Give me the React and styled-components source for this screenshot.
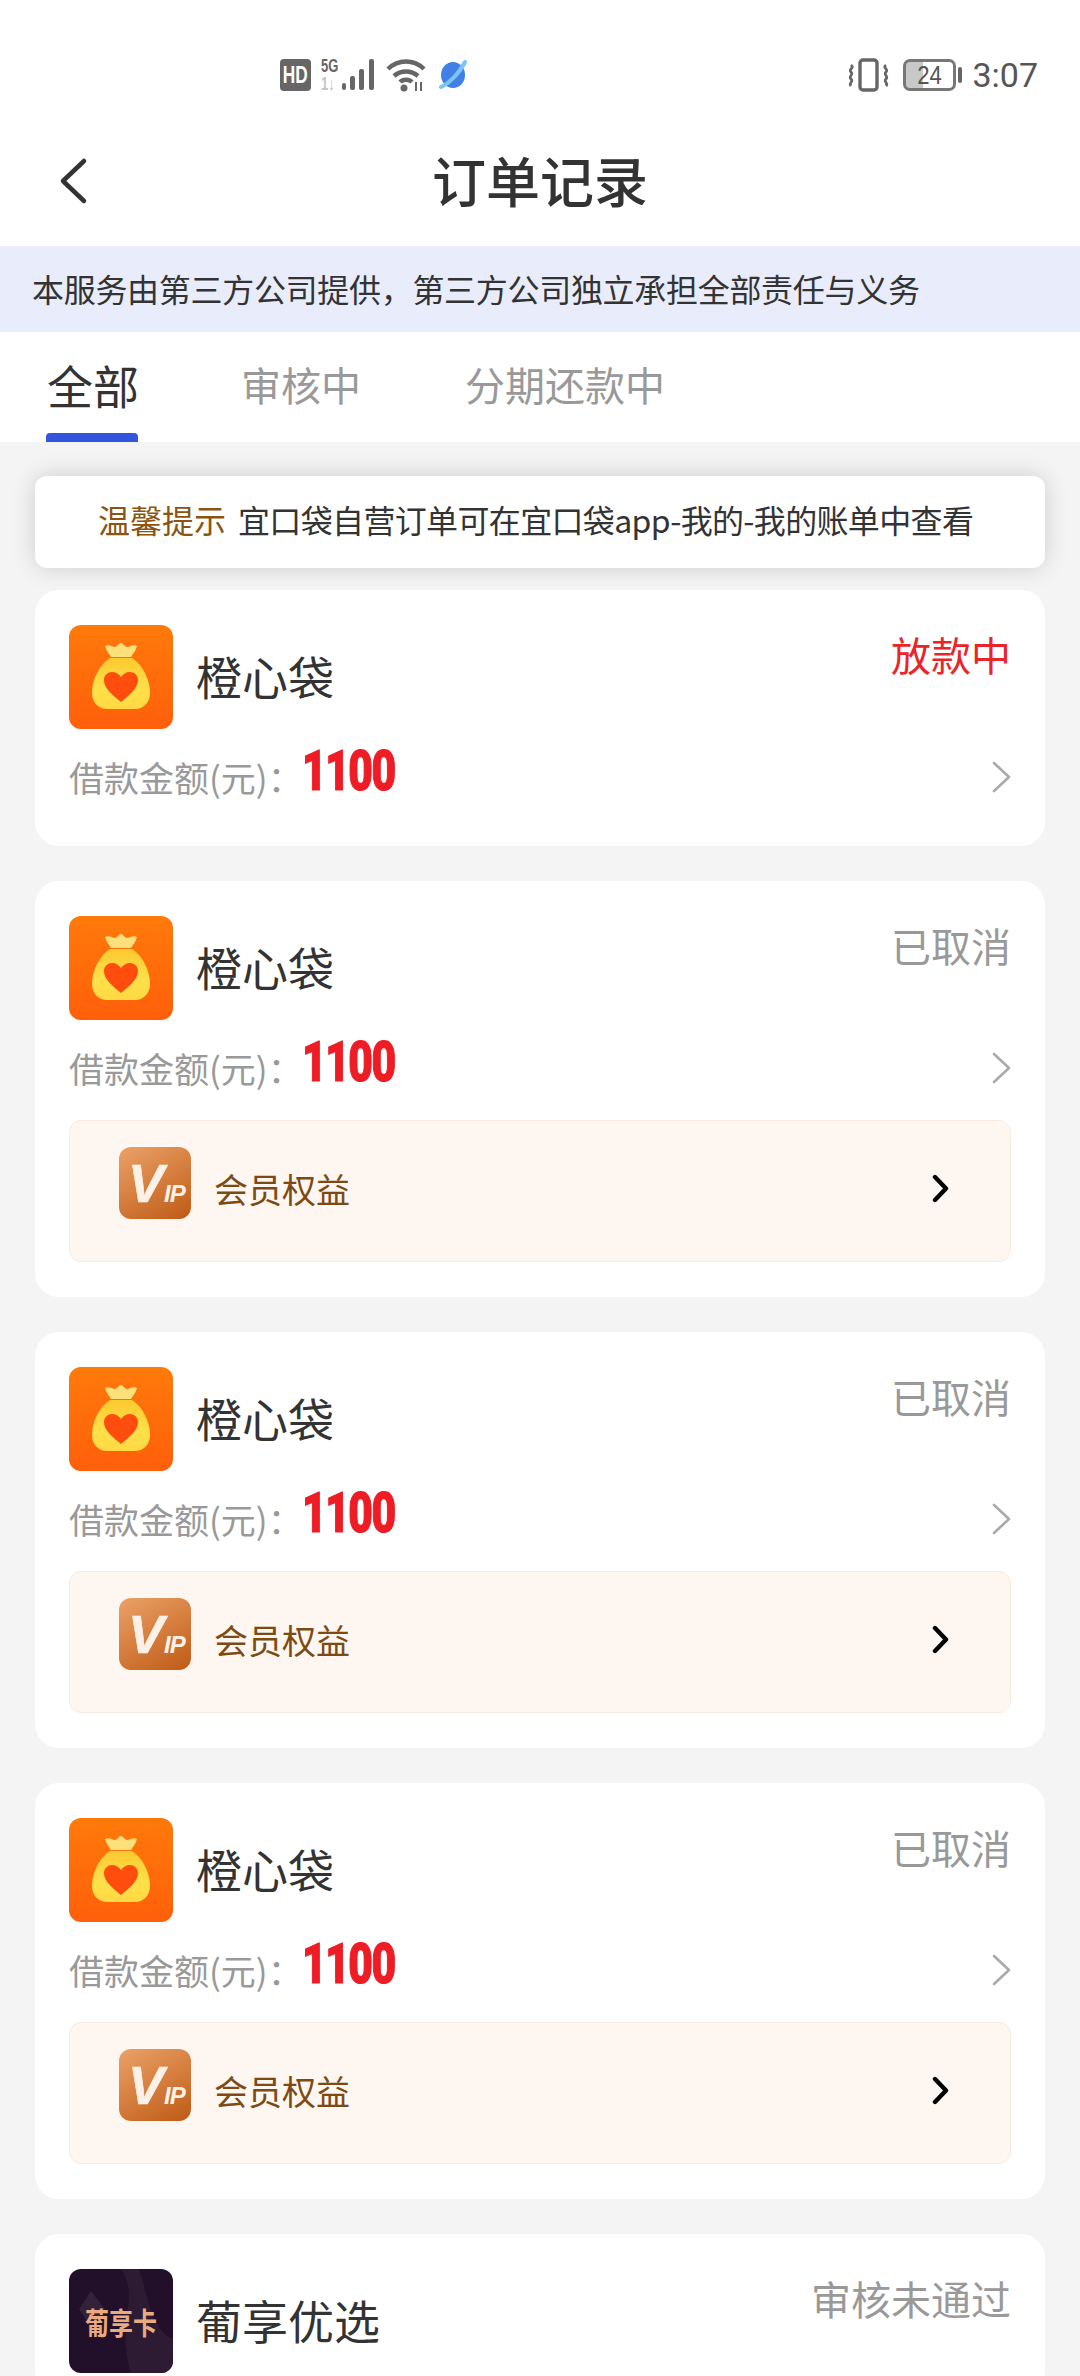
import React from 'react'
import styled, { createGlobalStyle } from 'styled-components'

const cjk = '"Noto Sans CJK SC", "Noto Sans", sans-serif'

const GlobalStyle = createGlobalStyle`
  html, body {
    margin: 0;
    padding: 0;
    background: #f4f4f4;
  }
  body {
    width: 1080px;
    height: 2376px;
    overflow: hidden;
    font-family: ${cjk};
  }
  * {
    box-sizing: border-box;
  }
`

const Page = styled.div`
  width: 1080px;
  height: 2376px;
  overflow: hidden;
  background: #f4f4f4;
`

const Top = styled.div`
  background: #fff;
`

const StatusBar = styled.div`
  height: 125px;
  padding: 59px 42px 0 280px;
  display: flex;
  align-items: flex-start;
`

const StatusLeft = styled.div`
  display: flex;
  align-items: center;
  gap: 10px;
  height: 32px;
`

const StatusRight = styled.div`
  margin-left: auto;
  display: flex;
  align-items: center;
  height: 32px;
`

const HdTile = styled.span`
  width: 31px;
  height: 32px;
  border-radius: 4px;
  background: #666;
  display: flex;
  align-items: center;
  justify-content: center;
  span {
    color: #fff;
    font: 700 24px/32px 'Liberation Sans', sans-serif;
    transform: scaleX(0.72);
  }
`

const NetStack = styled.span`
  width: 20px;
  display: flex;
  flex-direction: column;
  align-items: flex-start;
  font: 700 18px/15px 'Liberation Sans', sans-serif;
  color: #666;
  span {
    transform: scaleX(0.72);
    transform-origin: left center;
  }
  span + span {
    color: #c4c4c4;
    margin-top: 3px;
  }
`

const BatteryBox = styled.span`
  width: 53px;
  height: 32px;
  margin-left: 13px;
  border: 3px solid #777;
  border-radius: 7px;
  color: #555;
  font: 400 26px/26px 'Liberation Sans', sans-serif;
  text-align: center;
  background: linear-gradient(90deg, #c8c8c8 36%, transparent 36%);
  span {
    display: block;
    transform: scaleX(0.85);
  }
`

const BatteryNub = styled.span`
  width: 4px;
  height: 16px;
  margin-left: 2px;
  border-radius: 2px;
  background: #666;
`

const Clock = styled.span`
  margin-left: 10px;
  color: #555;
  font: 400 34px/32px Roboto, 'Liberation Sans', sans-serif;
`

const Header = styled.div`
  height: 121px;
  position: relative;
  display: flex;
  align-items: center;
  justify-content: center;
`

const BackIcon = styled.svg`
  position: absolute;
  left: 58px;
  top: 30px;
`

const Title = styled.h1`
  margin: -12px 0 0;
  font: 500 54px/72px ${cjk};
  color: #333;
`

const Banner = styled.div`
  height: 86px;
  padding-left: 32px;
  background: #e9edfb;
  color: #333;
  font: 400 32px/84px ${cjk};
  letter-spacing: -0.3px;
`

const Tabs = styled.div`
  height: 110px;
  padding: 22px 0 0 46px;
  display: flex;
`

const Tab = styled.div`
  width: ${p => p.$width}px;
  display: flex;
  flex-direction: column;
  align-items: flex-start;
  color: ${p => (p.$active ? '#333' : '#999')};
  font: 400 ${p => (p.$active ? 46 : 40)}px/60px ${cjk};
  padding-left: ${p => (p.$active ? 1 : 0)}px;
  &::after {
    content: '';
    width: 92px;
    height: 9px;
    margin-top: 19px;
    margin-left: -1px;
    border-radius: 4px 4px 0 0;
    background: ${p => (p.$active ? '#3355dd' : 'transparent')};
  }
`

const List = styled.div`
  padding: 34px 35px 0;
  display: flex;
  flex-direction: column;
`

const Notice = styled.div`
  height: 92px;
  margin-bottom: 22px;
  padding-left: 63px;
  border-radius: 12px;
  background: #fff;
  box-shadow: 0 0 24px rgba(0, 0, 0, 0.16);
  color: #333;
  font: 400 32px/87px ${cjk};
  white-space: nowrap;
  letter-spacing: -0.65px;
  span {
    color: #8a5412;
    margin-right: 12px;
    letter-spacing: 0;
  }
`

const Orders = styled.div`
  display: flex;
  flex-direction: column;
  gap: 35px;
`

const Card = styled.div`
  padding: 35px 34px 21px;
  border-radius: 24px;
  background: #fff;
`

const CardHead = styled.div`
  height: 104px;
  display: flex;
`

const AppIcon = styled.div`
  width: 104px;
  height: 104px;
  flex: none;
  border-radius: 12px;
  overflow: hidden;
  position: relative;
`

const AppName = styled.div`
  margin: 18px 0 0 23px;
  color: #333;
  font: 400 46px/64px ${cjk};
`

const Status = styled.div`
  margin-left: auto;
  color: ${p => (p.$red ? '#e8262a' : '#999')};
  font: 400 40px/62px ${cjk};
  margin-top: -2px;
`

const AmountRow = styled.div`
  height: 96px;
  display: flex;
  align-items: center;
`

const AmountLabel = styled.span`
  color: #999;
  font: 400 35px/50px ${cjk};
`

const Amount = styled.span`
  margin: -12px 0 0 -1px;
  color: #ee1c25;
  font: 900 56px/60px Roboto, 'Liberation Sans', sans-serif;
  letter-spacing: -2px;
  -webkit-text-stroke: 1.2px #ee1c25;
  transform: scaleX(0.76);
  transform-origin: left center;
`

const RowArrow = styled.svg`
  margin-left: auto;
`

const Perk = styled.div`
  height: 142px;
  margin: 4px 0 14px;
  padding: 0 61px 0 49px;
  border: 1px solid #f9ebdf;
  border-radius: 12px;
  background: #fdf6f1;
  display: flex;
  align-items: center;
`

const VipTile = styled.div`
  width: 72px;
  height: 72px;
  flex: none;
  margin-top: -16px;
  padding-left: 9px;
  border-radius: 12px;
  background: linear-gradient(150deg, #eba268, #bf5a15);
  color: #fcf1e6;
  display: flex;
  align-items: baseline;
  font-family: 'Liberation Sans', sans-serif;
  font-style: italic;
  font-weight: 700;
  line-height: 72px;
  overflow: hidden;
  span:first-child {
    font-size: 54px;
    -webkit-text-stroke: 0.6px #fcf1e6;
  }
  span:last-child {
    font-size: 24px;
    letter-spacing: -1px;
  }
`

const PerkName = styled.span`
  margin-left: 23px;
  margin-top: -4px;
  color: #7c4a12;
  font: 400 34px/48px ${cjk};
`

const PerkArrow = styled.svg`
  margin-left: auto;
  margin-top: -6px;
`

const CardText = styled.div`
  position: absolute;
  left: 0;
  right: 0;
  top: 36px;
  color: #e9ab7e;
  font: 700 24px/32px ${cjk};
  text-align: center;
  transform: scaleY(1.25);
`

const BagIcon = () => (
  <svg width="104" height="104" viewBox="0 0 104 104">
    <defs>
      <linearGradient id="bagBg" x1="0" y1="0" x2="0" y2="1">
        <stop offset="0" stopColor="#ff7a0a" />
        <stop offset="1" stopColor="#ff5f0b" />
      </linearGradient>
      <linearGradient id="bagFill" x1="0" y1="0" x2="0" y2="1">
        <stop offset="0" stopColor="#fcc92f" />
        <stop offset="0.6" stopColor="#ffe04a" />
        <stop offset="1" stopColor="#ffd944" />
      </linearGradient>
    </defs>
    <rect width="104" height="104" fill="url(#bagBg)" />
    <path d="M36 21c4-2 7 1 10 1 3-1 4-4 6-4s3 3 6 4c3 0 6-3 10-1-1 4-4 8-6 11H42c-2-3-5-7-6-11z" fill="#fde07a" />
    <path d="M41 33h22c11 7 18 22 18 35 0 10-7 16-15 16H38c-8 0-15-6-15-16 0-13 7-28 18-35z" fill="url(#bagFill)" />
    <path d="M52 77C44 70 35 64 35 55c0-5 4-8 8-8 4 0 7 2 9 5 2-3 5-5 9-5 4 0 8 3 8 8 0 9-9 15-17 22z" fill="#ff4d0e" />
  </svg>
)

const BackChevron = () => (
  <BackIcon width="30" height="52" viewBox="0 0 30 52" fill="none" stroke="#333" strokeWidth="4.5" strokeLinecap="round" strokeLinejoin="round">
    <path d="M26 6L5 26l21 20" />
  </BackIcon>
)

const OrderCard = ({ icon, name, status, red, amount, perk }) => (
  <Card>
    <CardHead>
      <AppIcon>{icon}</AppIcon>
      <AppName>{name}</AppName>
      <Status $red={red}>{status}</Status>
    </CardHead>
    {amount && (
      <AmountRow>
        <AmountLabel>借款金额(元)：</AmountLabel>
        <Amount>{amount}</Amount>
        <RowArrow width="20" height="32" viewBox="0 0 20 32" fill="none" stroke="#aaa" strokeWidth="2.6" strokeLinecap="round" strokeLinejoin="round">
          <path d="M3 2l15 14L3 30" />
        </RowArrow>
      </AmountRow>
    )}
    {perk && (
      <Perk>
        <VipTile>
          <span>V</span>
          <span>IP</span>
        </VipTile>
        <PerkName>会员权益</PerkName>
        <PerkArrow width="17" height="29" viewBox="0 0 17 29" fill="none" stroke="#000" strokeWidth="4.4" strokeLinecap="round" strokeLinejoin="round">
          <path d="M3 3l11 11.5L3 26" />
        </PerkArrow>
      </Perk>
    )}
  </Card>
)

const orders = [
  { status: '放款中', red: true },
  { status: '已取消', perk: true },
  { status: '已取消', perk: true },
  { status: '已取消', perk: true },
]

export default function App() {
  return (
    <Page>
      <GlobalStyle />
      <Top>
        <StatusBar>
          <StatusLeft>
            <HdTile><span>HD</span></HdTile>
            <NetStack>
              <span>5G</span>
              <span>1↓</span>
            </NetStack>
            <svg width="34" height="32" viewBox="0 0 34 32" style={{ marginLeft: -9 }} fill="#666">
              <rect x="0" y="24" width="4" height="7" rx="2" />
              <rect x="8" y="17" width="5" height="14" rx="2" />
              <rect x="17" y="10" width="5" height="21" rx="2" />
              <rect x="27" y="0" width="5" height="31" rx="2" />
            </svg>
            <svg width="40" height="34" viewBox="0 0 40 34" fill="none" stroke="#666" strokeWidth="4.5">
              <path d="M2 11C12 1 28 1 38 11" />
              <path d="M8 18c7-6 17-6 24 0" />
              <path d="M14 24c3-3 9-3 12 0" />
              <circle cx="18" cy="30" r="3.5" fill="#666" stroke="none" />
              <path d="M30 24v9M35 24v9" strokeWidth="2" />
            </svg>
            <svg width="28" height="30" viewBox="0 0 28 30" style={{ marginLeft: 3 }}>
              <ellipse cx="14" cy="15" rx="12" ry="13" fill="#3f7fe6" />
              <path d="M2 27C9 24 20 14 26 2" fill="none" stroke="#7cc4f7" strokeWidth="4" strokeLinecap="round" />
            </svg>
          </StatusLeft>
          <StatusRight>
            <svg width="42" height="34" viewBox="0 0 42 34" fill="none" stroke="#666">
              <rect x="12" y="2" width="17" height="30" rx="3" strokeWidth="3.4" />
              <path d="M3 7c4 3-3 4 0 7s-3 4 0 7 -3 4 0 7M38 7c-4 3 3 4 0 7s3 4 0 7 3 4 0 7" strokeWidth="2.8" />
            </svg>
            <BatteryBox><span>24</span></BatteryBox>
            <BatteryNub />
            <Clock>3:07</Clock>
          </StatusRight>
        </StatusBar>
        <Header>
          <BackChevron />
          <Title>订单记录</Title>
        </Header>
        <Banner>本服务由第三方公司提供，第三方公司独立承担全部责任与义务</Banner>
        <Tabs>
          <Tab $active $width={195}>全部</Tab>
          <Tab $width={224}>审核中</Tab>
          <Tab $width={260}>分期还款中</Tab>
        </Tabs>
      </Top>
      <List>
        <Notice>
          <span>温馨提示</span>宜口袋自营订单可在宜口袋app-我的-我的账单中查看
        </Notice>
        <Orders>
          {orders.map((o, i) => (
            <OrderCard key={i} icon={<BagIcon />} name="橙心袋" amount="1100" {...o} />
          ))}
          <OrderCard
            name="葡享优选"
            status="审核未通过"
            icon={
              <>
                <svg width="104" height="104" viewBox="0 0 104 104">
                  <rect width="104" height="104" fill="#22102a" />
                  <path d="M22 22l14 18-14 18L10 40zM82 62l12 18-12 18-12-18z" fill="#33203a" />
                  <path d="M52 0c20 30-6 50 10 104h42V70C80 60 78 20 70 0z" fill="#2d1a33" />
                </svg>
                <CardText>葡享卡</CardText>
              </>
            }
          />
        </Orders>
      </List>
    </Page>
  )
}
